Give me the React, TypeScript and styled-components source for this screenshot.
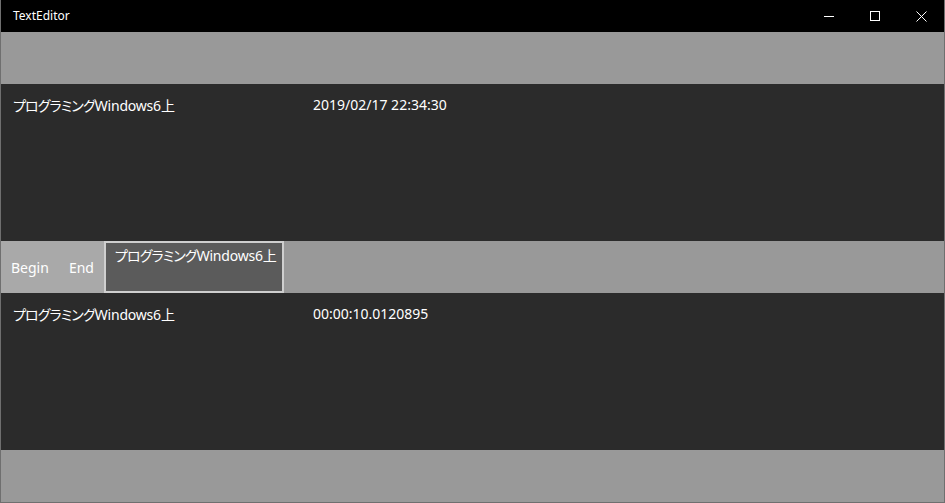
import React from "react";
import styled, { createGlobalStyle } from "styled-components";

const Global = createGlobalStyle`
  html, body { margin: 0; padding: 0; background: #000; }
  body { font-family: "Noto Sans", "Noto Sans CJK JP", sans-serif; }
`;

const Window = styled.div`
  width: 945px;
  height: 503px;
  box-sizing: border-box;
  border: 1px solid #6f6f6f;
  border-top: none;
  display: flex;
  flex-direction: column;
  background: #999;
  overflow: hidden;
`;

const TitleBar = styled.div`
  height: 32px;
  flex: none;
  background: #000;
  display: flex;
  align-items: center;
  color: #fff;
`;

const Title = styled.div`
  flex: 1;
  padding-left: 12px;
  font-size: 12px;
  font-family: "Noto Sans", "Noto Sans CJK JP", sans-serif;
  line-height: 32px;
`;

const CaptionButton = styled.div`
  width: 46px;
  height: 32px;
  display: flex;
  align-items: center;
  justify-content: center;
`;

const Band = styled.div<{ $h: number }>`
  height: ${(p) => p.$h}px;
  flex: none;
  background: #999;
`;

const ListPanel = styled.div`
  height: 157px;
  flex: none;
  background: #2b2b2b;
  padding: 11px 0 0 12px;
  box-sizing: border-box;
`;

const Row = styled.div`
  display: grid;
  grid-template-columns: 300px auto;
  color: #fff;
  font-size: 14px;
  line-height: 20px;
  font-family: "Noto Sans", "Noto Sans CJK JP", sans-serif;
`;

const Kana = styled.span`
  font-family: "Noto Sans CJK JP", sans-serif;
  font-feature-settings: "palt" 1;
  letter-spacing: -0.9px;
`;

const Latin = styled.span`
  letter-spacing: -0.2px;
`;

const TabBar = styled.div`
  height: 52px;
  flex: none;
  background: #999;
  display: flex;
`;

const TabGroup = styled.div`
  display: flex;
  background: #a9a9a9;
  height: 100%;
`;

const Tab = styled.div`
  color: #fff;
  font-size: 14px;
  display: flex;
  align-items: center;
  padding: 0 10px;
  height: 100%;
`;

const SelectedTab = styled.div`
  box-sizing: border-box;
  width: 180px;
  height: 100%;
  border: 2px solid #cfcfcf;
  background: #5b5b5b;
  color: #fff;
  font-size: 14px;
  line-height: 20px;
  padding: 2px 0 0 9px;
  white-space: nowrap;
`;

const BookTitle = () => (
  <span>
    <Kana>プログラミング</Kana>
    <Latin>Windows6</Latin>
    <Kana>上</Kana>
  </span>
);

export default function App() {
  return (
    <>
      <Global />
      <Window>
        <TitleBar>
          <Title>TextEditor</Title>
          <CaptionButton>
            <svg width="10" height="10" viewBox="0 0 10 10">
              <path d="M0 5.5h10" stroke="#fff" strokeWidth="1" />
            </svg>
          </CaptionButton>
          <CaptionButton>
            <svg width="10" height="10" viewBox="0 0 10 10">
              <rect x="0.5" y="0.5" width="9" height="9" fill="none" stroke="#fff" strokeWidth="1" />
            </svg>
          </CaptionButton>
          <CaptionButton>
            <svg width="11" height="11" viewBox="0 0 11 11">
              <path d="M0.5 0.5L10.5 10.5M10.5 0.5L0.5 10.5" stroke="#fff" strokeWidth="1" />
            </svg>
          </CaptionButton>
        </TitleBar>
        <Band $h={52} />
        <ListPanel>
          <Row>
            <BookTitle />
            <span>2019/02/17 22:34:30</span>
          </Row>
        </ListPanel>
        <TabBar>
          <TabGroup>
            <Tab>Begin</Tab>
            <Tab>End</Tab>
          </TabGroup>
          <SelectedTab>
            <BookTitle />
          </SelectedTab>
        </TabBar>
        <ListPanel>
          <Row>
            <BookTitle />
            <span>00:00:10.0120895</span>
          </Row>
        </ListPanel>
        <Band $h={51} />
      </Window>
    </>
  );
}
